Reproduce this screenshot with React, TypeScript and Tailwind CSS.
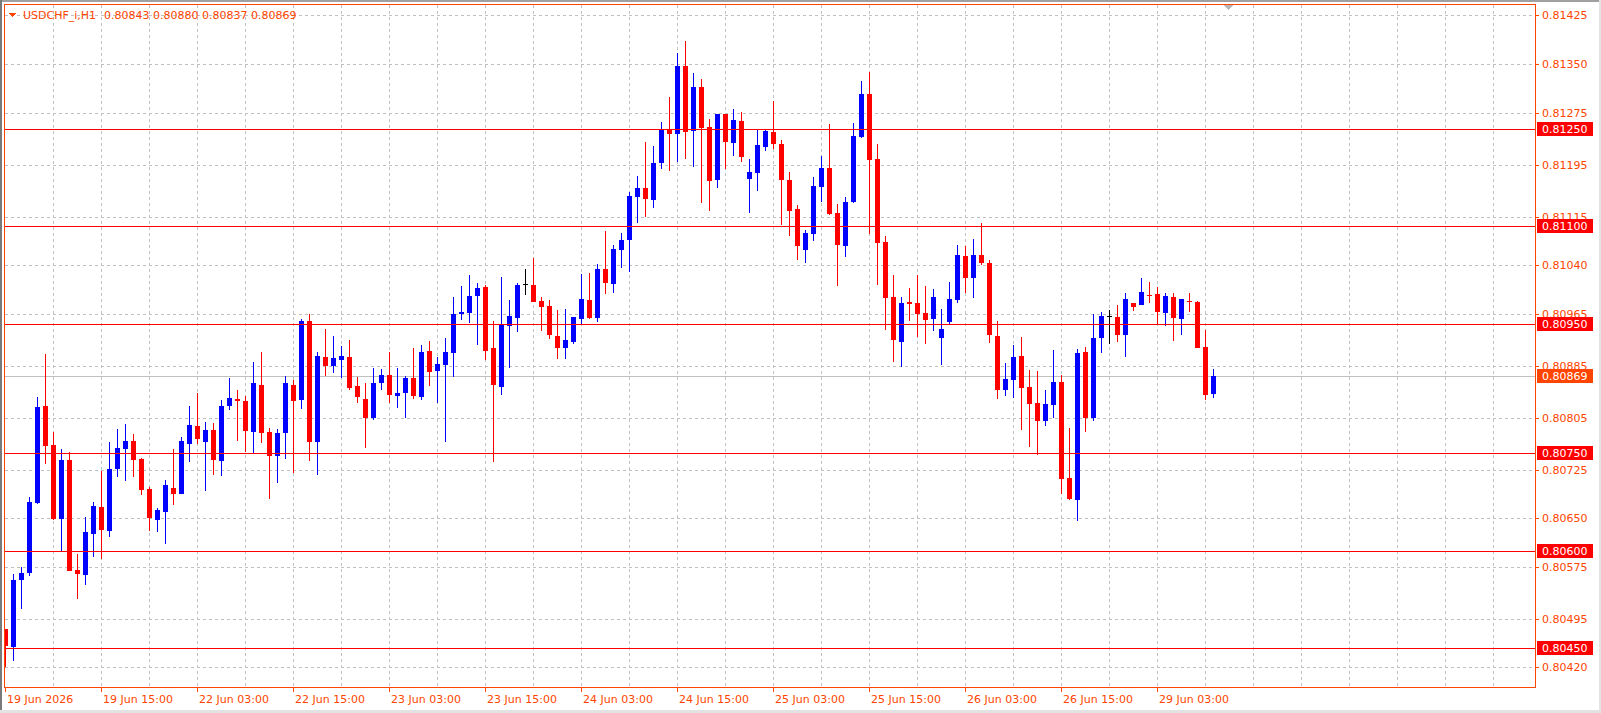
import React from "react";

type C = [string, number, number, number, number];
const segA: C[] = [
["r",1048,1048,1098,1160],["b",882,900,1100,1142],["b",862,880,900,986],["b",652,666,878,888],["b",352,381,669,672],
["r",222,378,497,552],["r",456,495,718,720],["b",508,540,716,812],["r",516,540,872,872],["r",822,870,882,956],
["b",712,756,884,914],["b",666,678,762,830],["r",572,682,750,838],["b",486,567,752,770],["b",446,504,567,590],
["b",432,483,507,602],["r",462,483,540,590],["r",534,537,630,644],["r",622,627,714,752],["b",684,690,720,756],
["b",600,615,696,792],["r",507,624,642,675],["b",472,483,642,642],["b",378,435,492,546],["r",339,438,477,492],
["b",426,450,486,633],["r",430,450,540,585],["b",360,378,543,588],["b",294,354,378,390],["r",330,356,362,483],
["r",348,363,453,516],["b",246,309,456,522],["r",216,315,459,489],["r",444,456,528,657],["b",447,459,528,609],
["b",288,309,459,537],["r",300,315,363,579],["b",117,123,360,387],
];
const segB: C[] = [
["r",252,273,637,692],["b",366,378,636,735],["r",297,381,408,438],["b",318,384,408,429],["b",348,378,390,444],
["r",330,381,474,480],["r",441,468,501,519],["r",459,507,564,654],["b",414,459,564,570],["b",417,435,459,480],
["r",366,435,495,519],["b",414,489,498,534],["b",438,444,489,564],["r",354,444,498,507],["b",345,366,501,510],
["r",333,363,426,468],["b",381,402,423,519],["b",324,366,405,636],["b",201,252,369,441],["b",168,246,252,270],
["b",135,198,249,279],["b",159,174,198,345],["r",165,171,363,390],["r",273,354,465,696],["b",141,282,471,495],
["b",210,258,288,414],["b",159,165,264,306],["k",117,162,164,195],["r",84,165,216,216],["r",201,213,231,303],
["r",210,228,315,327],["r",240,318,354,387],["b",237,330,354,387],["b",261,261,336,342],["b",132,207,267,285],
["r",129,210,264,267],["b",102,117,264,276],["r",3,117,159,192],
];
const segC: C[] = [
["b",645,657,762,789],["b",609,630,660,714],["b",486,498,630,726],["b",438,474,501,579],["r",336,474,507,561],
["b",348,399,510,534],["b",276,297,399,417],["r",201,297,312,423],["b",69,108,312,396],["r",33,108,306,387],
["b",129,171,303,411],["r",147,171,294,519],["r",267,291,453,543],["b",252,252,450,474],["r",252,252,336,417],
["b",237,270,339,378],["r",246,273,381,396],["b",387,426,447,549],["b",300,345,429,483],["b",297,303,351,363],
["r",213,306,342,357],["r",330,342,450,585],["r",426,450,543,618],["r",525,537,648,690],["b",600,609,660,699],
["b",441,468,612,633],["b",378,414,471,516],["r",282,414,552,555],["r",522,549,645,768],["b",501,516,648,681],
["b",279,318,516,519],["b",153,192,321,324],["r",126,192,390,612],["r",342,387,639,765],["r",618,636,804,900],
["r",735,801,930,996],
];
const segD: C[] = [
["b",291,309,426,501],["r",264,306,312,363],["r",225,309,342,411],["r",258,339,360,432],["b",267,291,357,393],
["b",327,387,414,495],["b",246,297,366,372],["b",135,165,300,309],["r",138,168,234,279],["b",117,165,234,294],
["r",69,165,189,195],["r",180,189,405,429],["r",363,408,570,597],["b",489,537,570,588],["b",435,471,540,594],
["r",411,468,564,690],["r",510,561,612,741],["r",513,609,663,765],["b",570,612,663,678],["b",450,546,615,654],
["r",525,546,837,882],["r",684,834,897,900],["b",447,459,900,963],["r",441,456,654,696],["b",342,414,654,663],
["b",336,348,414,459],["k",330,348,350,432],["r",315,351,405,426],["b",279,297,405,471],["r",309,309,321,333],
["b",234,276,315,315],["r",246,285,287,309],["r",261,282,336,372],["b",279,288,339,378],["r",279,291,354,423],
["b",297,297,357,405],["r",279,303,305,336],["r",303,306,444,444],["r",390,441,585,600],["b",507,528,582,594],
];

const candles: { c: string; h: number; t: number; b: number; l: number }[] = [];
([[280, segA], [230, segB], [30, segC], [200, segD]] as [number, C[]][]).forEach(([off, seg]) =>
  seg.forEach(([c, h, t, b, l]) =>
    candles.push({ c, h: off + h / 3, t: off + t / 3, b: off + b / 3, l: off + l / 3 })
  )
);

const yP = (p: number) => 129 + (0.8125 - p) * 64875;
const gridPrices = [0.81425, 0.8135, 0.81275, 0.81195, 0.81115, 0.8104, 0.80965, 0.80885, 0.80805, 0.80725, 0.8065, 0.80575, 0.80495, 0.8042];
const levels = [0.8125, 0.811, 0.8095, 0.8075, 0.806, 0.8045];
const times = ["19 Jun 2026", "19 Jun 15:00", "22 Jun 03:00", "22 Jun 15:00", "23 Jun 03:00", "23 Jun 15:00", "24 Jun 03:00", "24 Jun 15:00", "25 Jun 03:00", "25 Jun 15:00", "26 Jun 03:00", "26 Jun 15:00", "29 Jun 03:00"];
const OR = "#ff4500";
const colorOf = (c: string) => (c === "b" ? "#0000ff" : c === "r" ? "#ff0000" : "#000000");

export default function App() {
  const vx: number[] = [];
  for (let x = 53.5; x < 1535; x += 48) vx.push(x);
  return (
    <div className="w-[1601px] h-[713px] bg-white overflow-hidden font-['DejaVu_Sans',sans-serif]">
      <svg width="1601" height="713" viewBox="0 0 1601 713" shapeRendering="crispEdges" fontSize="11" fontFamily='"DejaVu Sans", sans-serif'>
        <defs>
          <clipPath id="plot"><rect x="5" y="5" width="1530" height="682" /></clipPath>
        </defs>
        <rect x="0" y="0" width="1601" height="2" fill="#a0a0a0" />
        <rect x="0" y="0" width="2" height="713" fill="#7a7a7a" />
        <rect x="1599" y="0" width="2" height="713" fill="#e3e3e3" />
        <rect x="0" y="710" width="1601" height="3" fill="#e3e3e3" />
        {vx.map((x) => (
          <line key={"v" + x} x1={x} y1={5} x2={x} y2={687} stroke="#c0c0c0" strokeDasharray="3 3" />
        ))}
        {gridPrices.map((p) => (
          <line key={"h" + p} x1={5} y1={Math.round(yP(p)) + 0.5} x2={1535} y2={Math.round(yP(p)) + 0.5} stroke="#c0c0c0" strokeDasharray="3 3" />
        ))}
        <line x1={5} y1={376.5} x2={1535} y2={376.5} stroke="#c0c0c0" />
        <g clipPath="url(#plot)">
          {candles.map((k, i) => {
            const cx = 5 + 8 * i;
            const col = colorOf(k.c);
            const bh = Math.max(1, k.b - k.t);
            return (
              <g key={i}>
                <rect x={cx} y={k.h} width={1} height={k.l - k.h} fill={col} />
                <rect x={cx - 2} y={k.t} width={5} height={bh} fill={col} />
              </g>
            );
          })}
        </g>
        {levels.map((p) => (
          <line key={"l" + p} x1={5} y1={Math.round(yP(p)) + 0.5} x2={1535} y2={Math.round(yP(p)) + 0.5} stroke="#ff0000" />
        ))}
        <rect x="4.5" y="4.5" width="1531" height="683" fill="none" stroke={OR} />
        <polygon points="1223,5 1233,5 1228,10" fill="#b8b8b8" />
        {gridPrices.map((p) => {
          const y = Math.round(yP(p));
          return (
            <g key={"pl" + p}>
              <rect x={1536} y={y} width={3} height={1} fill={OR} />
              <text x={1542} y={y + 4} fill={OR}>{p.toFixed(5)}</text>
            </g>
          );
        })}
        {levels.map((p) => {
          const y = Math.round(yP(p));
          return (
            <g key={"lb" + p}>
              <rect x={1537} y={y - 7} width={56} height={14} fill="#ff0000" />
              <text x={1542} y={y + 4} fill="#ffffff">{p.toFixed(5)}</text>
            </g>
          );
        })}
        <rect x={1537} y={369} width={56} height={14} fill={OR} />
        <text x={1542} y={380} fill="#ffffff">0.80869</text>
        {times.map((t, i) => {
          const x = 5 + 96 * i;
          return (
            <g key={t}>
              <rect x={x} y={688} width={1} height={4} fill={OR} />
              <text x={x + 2} y={703} fill={OR}>{t}</text>
            </g>
          );
        })}
        <polygon points="8,13 16,13 12,17" fill={OR} />
        <text x={23} y={19} fill={OR}>USDCHF_i,H1</text>
        <text x={104} y={19} fill={OR}>0.80843 0.80880 0.80837 0.80869</text>
      </svg>
    </div>
  );
}
